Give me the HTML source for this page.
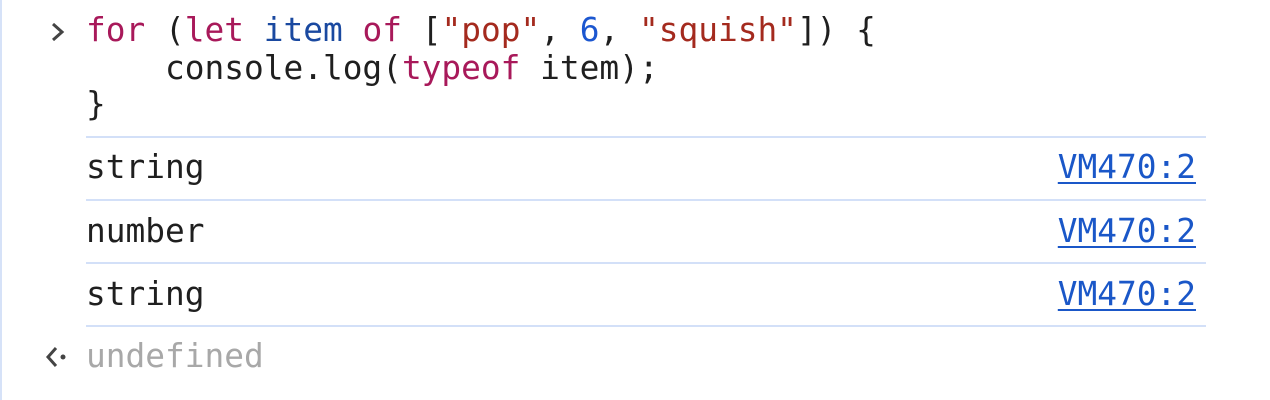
<!DOCTYPE html>
<html><head><meta charset="utf-8"><style>
body{margin:0;width:1270px;height:400px;background:#fff;position:relative;overflow:hidden;font-family:"DejaVu Sans Mono","Liberation Mono",monospace;font-size:32.8px;color:#1f1f1f}
.l{position:absolute;left:86px;white-space:pre;line-height:36px}
.k{color:#a8195a}.v{color:#1a49a0}.s{color:#a42a1e}.n{color:#1c57d0}
.sep{position:absolute;left:86px;width:1120px;height:2px;background:#d3e0f8}
.a{position:absolute;right:74px;color:#1a57c8;text-decoration:underline;text-decoration-thickness:2px;text-underline-offset:4px;line-height:36px}
.bl{position:absolute;left:0;top:0;width:2px;height:400px;background:#d6e2f8}
</style></head><body>
<div class="bl"></div>
<svg style="position:absolute;left:48px;top:21px" width="20" height="22"><path d="M5 3 L14 11 L5 19" stroke="#444" stroke-width="3" fill="none"/></svg>
<div class="l" style="top:12px"><span class="k">for</span> (<span class="k">let</span> <span class="v">item</span> <span class="k">of</span> [<span class="s">"pop"</span>, <span class="n">6</span>, <span class="s">"squish"</span>]) {</div>
<div class="l" style="top:50px">    console.log(<span class="k">typeof</span> item);</div>
<div class="l" style="top:86px">}</div>
<div class="sep" style="top:136px"></div>
<div class="l" style="top:149px">string</div><div class="a" style="top:149px">VM470:2</div>
<div class="sep" style="top:199px"></div>
<div class="l" style="top:213px">number</div><div class="a" style="top:213px">VM470:2</div>
<div class="sep" style="top:262px"></div>
<div class="l" style="top:276px">string</div><div class="a" style="top:276px">VM470:2</div>
<div class="sep" style="top:325px"></div>
<svg style="position:absolute;left:44px;top:345px" width="24" height="24"><path d="M12 3 L4 12 L12 21" stroke="#444" stroke-width="3" fill="none"/><circle cx="19" cy="12" r="2.5" fill="#444"/></svg>
<div class="l" style="top:338px;color:#a8a8a8">undefined</div>
</body></html>
